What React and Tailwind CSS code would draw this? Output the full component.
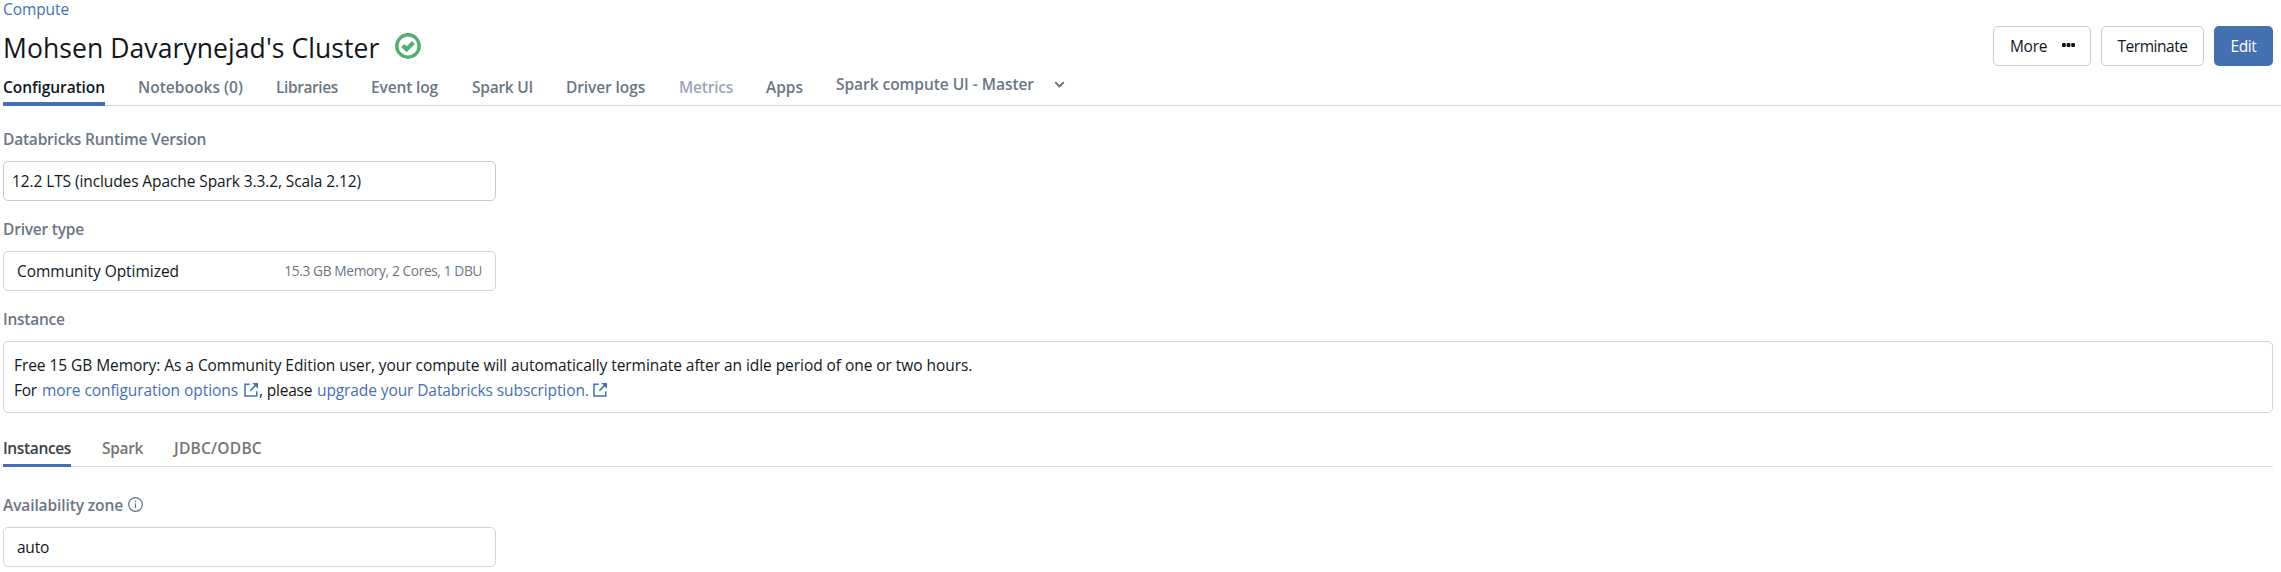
function CheckBadge() {
  return (
    <svg className="h-[26px] w-[26px] shrink-0" viewBox="0 0 26 26" fill="none">
      <circle cx="13" cy="13" r="11.2" stroke="#55ad72" strokeWidth="3.4" />
      <path d="M7.7 12.4l3.9 3.9 6.9-6.9" stroke="#55ad72" strokeWidth="4.2" />
    </svg>
  );
}

function Chevron() {
  return (
    <svg className="h-[7px] w-[11px]" viewBox="0 0 11 7" fill="none">
      <path d="M1.2 1.2l4.3 4.2 4.3-4.2" stroke="#5f6e7c" strokeWidth="1.8" />
    </svg>
  );
}

function ExternalLink() {
  return (
    <svg className="mb-[2px] h-[14px] w-[14px] shrink-0" viewBox="0 0 14 14" fill="none" stroke="#4470b2" strokeWidth="1.5">
      <path d="M5.6 1.2H1v11.9h11.8V8.2M12.4 1.6L6.4 7.6" />
      <path d="M8.3 0H14v5.7z" fill="#4470b2" stroke="none" />
    </svg>
  );
}

function InfoIcon() {
  return (
    <svg className="mb-px h-[15px] w-[15px]" viewBox="0 0 15 15" fill="none" stroke="#5f6e7c">
      <circle cx="7.5" cy="7.5" r="6.8" strokeWidth="1.2" />
      <path d="M7.5 6.3v4.9M7.5 3.7v1.4" strokeWidth="1.2" />
    </svg>
  );
}

const tabs = [
  { label: "Configuration", style: "w-[102px] tracking-[-0.07px] text-[#11171c] border-[#4470b2]" },
  { label: "Notebooks (0)", style: "w-[105px] tracking-[0.04px] text-[#6b7683] border-transparent" },
  { label: "Libraries", style: "w-[62px] tracking-[-0.42px] text-[#6b7683] border-transparent" },
  { label: "Event log", style: "w-[68px] tracking-[-0.13px] text-[#6b7683] border-transparent" },
  { label: "Spark UI", style: "w-[61px] tracking-[-0.25px] text-[#6b7683] border-transparent" },
  { label: "Driver logs", style: "w-[80px] tracking-[-0.1px] text-[#6b7683] border-transparent" },
  { label: "Metrics", style: "w-[54px] tracking-[-0.22px] text-[#9ca6b5] border-transparent" },
  { label: "Apps", style: "w-[37px] tracking-[-0.02px] text-[#6b7683] border-transparent" },
];

const instanceTabs = [
  { label: "Instances", style: "w-[68px] tracking-[-0.36px] text-[#3a4047] border-[#4470b2]" },
  { label: "Spark", style: "w-[41px] tracking-[-0.34px] text-[#757575] border-transparent" },
  { label: "JDBC/ODBC", style: "w-[90px] tracking-[0.25px] text-[#757575] border-transparent" },
];

function Label({ className, children }) {
  return <div className={"flex h-6 items-center font-semibold leading-6 text-[#6b7683] " + className}>{children}</div>;
}

export default function App() {
  return (
    <div className="flex h-[572px] flex-col overflow-hidden whitespace-nowrap bg-white pl-[3px] font-['Open_Sans',sans-serif] text-[15.5px] text-[#11171c]">
      <a className="h-[19px] leading-[19px] tracking-[-0.09px] text-[#4470b2]">Compute</a>

      <header className="mt-[7px] flex h-10 items-center justify-between pr-2">
        <div className="flex items-center">
          <h1 className="w-[392px] pt-[4px] text-[26.5px] font-medium leading-9 tracking-[0.08px]">Mohsen Davarynejad's Cluster</h1>
          <CheckBadge />
        </div>
        <div className="flex gap-[10px]">
          <button className="flex h-10 w-[98px] items-center rounded-[5px] border border-[#c0cdd8] pl-4 pt-[2px] tracking-[-0.32px]">
            More
            <svg className="mb-1 ml-[15px] h-[4px] w-[13px]" viewBox="0 0 13 4" fill="#11171c">
              <rect width="3.8" height="4" rx="1" />
              <rect x="4.6" width="3.8" height="4" rx="1" />
              <rect x="9.2" width="3.8" height="4" rx="1" />
            </svg>
          </button>
          <button className="h-10 w-[103px] rounded-[5px] border border-[#c0cdd8] pt-[2px] tracking-[-0.46px]">Terminate</button>
          <button className="h-10 w-[59px] rounded-[5px] bg-[#4470b2] pt-[2px] tracking-[-0.38px] text-white">Edit</button>
        </div>
      </header>

      <nav className="flex h-10 shrink-0 gap-[33px] border-b border-[#cdd6de] font-semibold">
        {tabs.map((t) => (
          <div key={t.label} className={"h-10 border-b-4 pt-[7px] leading-[29px] " + t.style}>
            {t.label}
          </div>
        ))}
        <div className="flex h-9 items-center pt-px text-[#6b7683]">
          <span className="w-[218px] tracking-[-0.046px]">Spark compute UI - Master</span>
          <Chevron />
        </div>
      </nav>

      <main className="pr-2">
        <Label className="mt-[21px] tracking-[-0.21px]">Databricks Runtime Version</Label>
        <div className="mt-[10px] flex h-10 w-[493px] items-center rounded-[5px] border border-[#c0cdd8] pl-2 pt-[2px] tracking-[-0.1px]">
          12.2 LTS (includes Apache Spark 3.3.2, Scala 2.12)
        </div>

        <Label className="mt-4 tracking-[-0.21px]">Driver type</Label>
        <div className="mt-[10px] flex h-10 w-[493px] items-center justify-between rounded-[5px] border border-[#cdd6de] px-[13px] pt-[2px]">
          <span className="tracking-[-0.038px]">Community Optimized</span>
          <span className="mb-[2px] text-[13.75px] tracking-[-0.4px] text-[#6b7683]">15.3 GB Memory, 2 Cores, 1 DBU</span>
        </div>

        <Label className="mt-4 tracking-[-0.27px]">Instance</Label>
        <div className="mt-[10px] h-[72px] rounded-[5px] border border-[#cdd6de] pl-[10px] pt-[11px] leading-[25px]">
          <p className="tracking-[-0.055px]">
            Free 15 GB Memory: As a Community Edition user, your compute will automatically terminate after an idle period of one or two hours.
          </p>
          <p className="flex items-center">
            <span className="w-[28px] tracking-[-0.3px]">For</span>
            <a className="w-[202px] tracking-[-0.067px] text-[#4470b2]">more configuration options</a>
            <ExternalLink />
            <span className="w-[59px] pl-px tracking-[-0.2px]">, please</span>
            <a className="w-[276px] tracking-[-0.1px] text-[#4470b2]">upgrade your Databricks subscription.</a>
            <ExternalLink />
          </p>
        </div>

        <div className="mt-[19px] flex h-[35px] gap-[31px] border-b border-[#d8dde1] font-semibold">
          {instanceTabs.map((t) => (
            <div key={t.label} className={"h-[35px] border-b-[3px] leading-8 " + t.style}>
              {t.label}
            </div>
          ))}
        </div>

        <Label className="mt-[26px]">
          <span className="w-[125px] tracking-[-0.11px]">Availability zone</span>
          <InfoIcon />
        </Label>
        <div className="mt-[10px] flex h-10 w-[493px] items-center rounded-[5px] border border-[#cdd6de] pl-[13px] pt-[2px] tracking-[-0.24px]">auto</div>
      </main>
    </div>
  );
}
